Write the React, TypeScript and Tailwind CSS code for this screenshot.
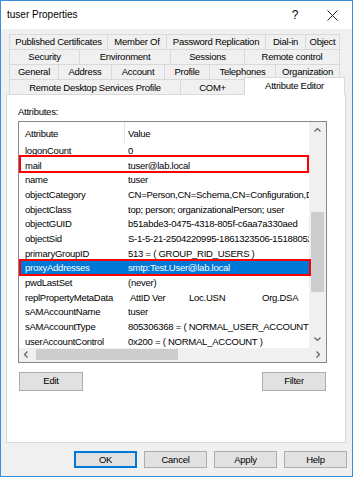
import React from "react";

const rows1 = [
  { t: "Published Certificates", w: 98 },
  { t: "Member Of", w: 59 },
  { t: "Password Replication", w: 99 },
  { t: "Dial-in", w: 40 },
  { t: "Object", w: 35 },
];
const rows2 = [
  { t: "Security", w: 70 },
  { t: "Environment", w: 91 },
  { t: "Sessions", w: 74 },
  { t: "Remote control", w: 96 },
];
const rows3 = [
  { t: "General", w: 49 },
  { t: "Address", w: 53 },
  { t: "Account", w: 53 },
  { t: "Profile", w: 45 },
  { t: "Telephones", w: 66 },
  { t: "Organization", w: 65 },
];

type Attr = { n: string; v: React.ReactNode; sel?: boolean };

const attrs: Attr[] = [
  { n: "logonCount", v: "0" },
  { n: "mail", v: "tuser@lab.local" },
  { n: "name", v: "tuser" },
  { n: "objectCategory", v: "CN=Person,CN=Schema,CN=Configuration,DC=lab,DC=local" },
  { n: "objectClass", v: "top; person; organizationalPerson; user" },
  { n: "objectGUID", v: "b51abde3-0475-4318-805f-c6aa7a330aed" },
  { n: "objectSid", v: "S-1-5-21-2504220995-1861323506-1518805201-1104" },
  { n: "primaryGroupID", v: "513 = ( GROUP_RID_USERS )" },
  { n: "proxyAddresses", v: "smtp:Test.User@lab.local", sel: true },
  { n: "pwdLastSet", v: "(never)" },
  {
    n: "replPropertyMetaData",
    v: (
      <span className="flex">
        <span className="inline-block w-[22px] ml-[2px]">AttID</span>
        <span className="inline-block w-[37px]">Ver</span>
        <span className="inline-block w-[73px]">Loc.USN</span>
        <span className="inline-block">Org.DSA</span>
      </span>
    ),
  },
  { n: "sAMAccountName", v: "tuser" },
  { n: "sAMAccountType", v: "805306368 = ( NORMAL_USER_ACCOUNT )" },
  { n: "userAccountControl", v: "0x200 = ( NORMAL_ACCOUNT )" },
];

function TabRow({ tabs }: { tabs: { t: string; w: number }[] }) {
  return (
    <div className="flex h-[15px]">
      {tabs.map((tab, i) => (
        <div
          key={tab.t}
          style={{ width: tab.w }}
          className={
            "flex items-center justify-center border-t border-l border-[#d9d9d9] whitespace-nowrap" +
            (i === tabs.length - 1 ? " border-r" : "")
          }
        >
          {tab.t}
        </div>
      ))}
    </div>
  );
}

function Chevron({ dir }: { dir: "up" | "down" | "left" | "right" }) {
  const d =
    dir === "up"
      ? "M0.5 4.5 L3.5 1.5 L6.5 4.5"
      : dir === "down"
      ? "M0.5 1.5 L3.5 4.5 L6.5 1.5"
      : dir === "left"
      ? "M4.5 0.5 L1.5 3.5 L4.5 6.5"
      : "M1.5 0.5 L4.5 3.5 L1.5 6.5";
  const vert = dir === "up" || dir === "down";
  return (
    <svg
      width={vert ? 7 : 6}
      height={vert ? 6 : 7}
      viewBox={vert ? "0 0 7 6" : "0 0 6 7"}
      fill="none"
      stroke="#606060"
      strokeWidth="1.2"
    >
      <path d={d} />
    </svg>
  );
}

function Btn({ label, w, h, focus }: { label: string; w: string; h: string; focus?: boolean }) {
  return (
    <div
      className={
        "flex items-center justify-center bg-[#e1e1e1] " +
        w +
        " " +
        h +
        (focus ? " border-2 border-[#0078d7]" : " border border-[#adadad]")
      }
    >
      {label}
    </div>
  );
}

export default function App() {
  return (
    <div className="w-[353px] h-[477px] bg-[#f0f0f0] border border-[#3b8fdc] flex flex-col relative text-[9.5px] tracking-[-0.25px] text-black leading-none [font-family:'Liberation_Sans',Arial,sans-serif] overflow-hidden">
      {/* Title bar */}
      <div className="h-[28px] bg-white flex items-center shrink-0 tracking-normal">
        <div className="pl-[6px] text-[10px] flex-1">tuser Properties</div>
        <div className="text-[12px] w-[12px] mr-[26px] text-center">?</div>
        <div className="mr-[14px] flex items-center">
          <svg width="11" height="11" viewBox="0 0 11 11" stroke="#222" strokeWidth="1">
            <path d="M0.5 0.5 L10.5 10.5 M10.5 0.5 L0.5 10.5" />
          </svg>
        </div>
      </div>

      {/* Tabs */}
      <div className="mt-[5px] ml-[8px] flex flex-col">
        <TabRow tabs={rows1} />
        <TabRow tabs={rows2} />
        <TabRow tabs={rows3} />
        <div className="flex h-[15px]">
          <div className="w-[171px] flex items-center justify-center border-t border-l border-[#d9d9d9] pt-[1px]">
            Remote Desktop Services Profile
          </div>
          <div className="w-[64px] flex items-center justify-center border-t border-l border-[#d9d9d9] pt-[1px]">
            COM+
          </div>
          <div className="w-[101px] h-[18px] -mt-[2px] bg-white border-t border-l border-r border-[#d9d9d9] flex items-start justify-center pt-[3px] relative z-10">
            Attribute Editor
          </div>
        </div>
      </div>

      {/* Panel */}
      <div className="ml-[5px] w-[340px] h-[349px] bg-white border border-[#d9d9d9] flex flex-col shrink-0">
        <div className="mt-[12px] ml-[11px]">Attributes:</div>
        <div className="mt-[4px] ml-[11px] w-[309px] h-[242px] border border-[#828790] flex flex-col relative">
          <div className="flex h-[226px]">
            {/* list content */}
            <div className="w-[290px] overflow-hidden flex flex-col">
              <div className="flex h-[21px] shrink-0 items-center">
                <div className="w-[105px] pl-[6px] pt-[3px]">Attribute</div>
                <div className="w-[1px] h-[21px] bg-[#e5e5e5]"></div>
                <div className="pl-[3px] pt-[3px]">Value</div>
              </div>
              {attrs.map((a) => (
                <div
                  key={a.n}
                  className={
                    "flex h-[14.67px] shrink-0 items-center whitespace-nowrap " +
                    (a.sel ? "bg-[#0078d7] text-white" : "")
                  }
                >
                  <div className="w-[106px] pl-[6px] pt-[2px] shrink-0">{a.n}</div>
                  <div className="pl-[3px] pt-[2px] shrink-0">{a.v}</div>
                </div>
              ))}
            </div>
            {/* vertical scrollbar */}
            <div className="w-[17px] bg-[#f0f0f0] flex flex-col items-center">
              <div className="h-[17px] flex items-center justify-center">
                <Chevron dir="up" />
              </div>
              <div className="flex-1 w-full flex flex-col items-center">
                <div className="h-[73px]"></div>
                <div className="w-[13px] h-[80px] bg-[#cdcdcd]"></div>
              </div>
              <div className="h-[17px] flex items-center justify-center">
                <Chevron dir="down" />
              </div>
            </div>
          </div>
          {/* horizontal scrollbar */}
          <div className="flex h-[14px] bg-[#f0f0f0] items-center">
            <div className="w-[14px] flex items-center justify-center">
              <Chevron dir="left" />
            </div>
            <div className="flex-1 h-full flex items-center">
              <div className="ml-[3px] w-[142px] h-[11px] bg-[#cdcdcd]"></div>
            </div>
            <div className="w-[17px] flex items-center justify-center">
              <Chevron dir="right" />
            </div>
          </div>
          {/* annotations */}
          <div className="absolute left-[0px] top-[33px] w-[290px] h-[18px] border-2 border-[#ff0000] pointer-events-none"></div>
          <div className="absolute left-[0px] top-[137px] w-[292px] h-[17px] border-2 border-[#ff0000] pointer-events-none"></div>
        </div>
        <div className="mt-[9px] flex justify-between pl-[12px] pr-[19px]">
          <Btn label="Edit" w="w-[64px]" h="h-[19px]" />
          <Btn label="Filter" w="w-[64px]" h="h-[19px]" />
        </div>
      </div>

      {/* Bottom buttons */}
      <div className="mt-[8px] flex justify-end gap-[7px] pr-[5px]">
        <Btn label="OK" w="w-[63px]" h="h-[17px]" focus />
        <Btn label="Cancel" w="w-[63px]" h="h-[17px]" />
        <Btn label="Apply" w="w-[63px]" h="h-[17px]" />
        <Btn label="Help" w="w-[63px]" h="h-[17px]" />
      </div>
    </div>
  );
}
